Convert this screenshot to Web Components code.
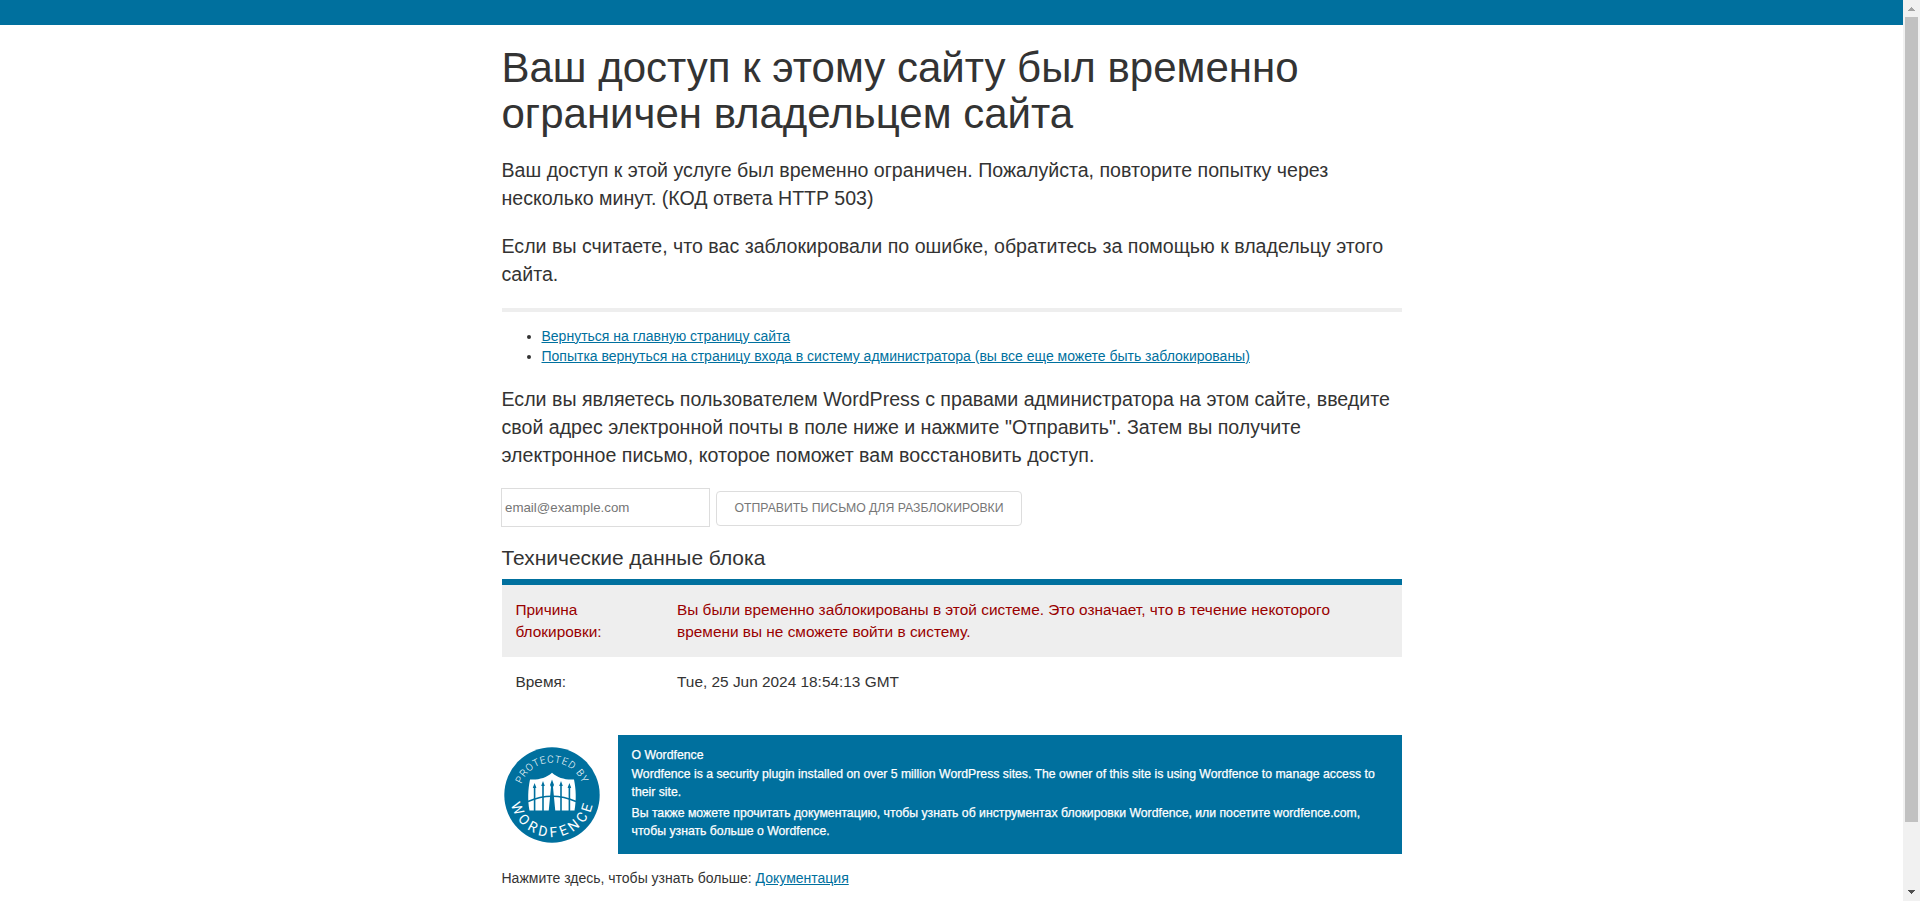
<!DOCTYPE html>
<html lang="ru">
<head>
<meta charset="utf-8">
<title>Доступ временно ограничен</title>
<style>
html,body{margin:0;height:100%;overflow:hidden;background:#fff}
body{font:14px/20px "Liberation Sans",Arial,sans-serif;color:#333}
</style>
</head>
<body>
<block-page></block-page>
<script>
const define = (name, html) => customElements.define(name, class extends HTMLElement {
  constructor(){ super(); this.attachShadow({mode:'open'}).innerHTML = html; }
});

define('page-scrollbar', `<style>
:host{display:flex;flex-direction:column;width:17px;height:100%;background:#f1f1f1;align-items:center;box-sizing:border-box}
svg{width:17px;height:17px;flex:none;display:block}
.track{flex:1;width:100%}
.thumb{width:13px;height:805px;margin:0 auto;background:#c1c1c1}
</style>
<svg viewBox="0 0 17 17" shape-rendering="crispEdges"><path d="M8 7h1v1h1v1h1v1h1v1H5v-1h1V9h1V8h1z" fill="#a3a3a3"/></svg>
<div class="track"><div class="thumb"></div></div>
<svg viewBox="0 0 17 17" shape-rendering="crispEdges"><path d="M5 6h7v1h-1v1h-1v1H9v1H8V9H7V8H6V7H5z" fill="#505050"/></svg>`);

define('text-block', `<style>
:host{display:block;font-size:19.6px;line-height:28px;margin-bottom:19.6px;white-space:nowrap}
</style><slot></slot>`);

define('page-title', `<style>
:host{display:block;margin-bottom:19.1px;white-space:nowrap}
h1{font-size:42px;line-height:46.2px;font-weight:400;margin:0}
</style><h1><slot></slot></h1>`);

define('link-list', `<style>
:host{display:block;margin:13.9px 0 19px}
ul{margin:0;padding:0 0 0 40px}
a{color:#00709e;text-decoration:underline;white-space:nowrap}
</style><ul><li><a>Вернуться на главную страницу сайта</a></li>
<li><a>Попытка вернуться на страницу входа в систему администратора (вы все еще можете быть заблокированы)</a></li></ul>`);

define('unlock-form', `<style>
:host{display:flex;align-items:center;gap:6px;margin-left:-.5px;height:39px}
input,button{font-family:inherit;box-sizing:border-box;background:#fff;border:1px solid #ddd;margin:0}
input{width:209px;height:39px;padding:0 3px;font-size:13.3px;color:#777}
input::placeholder{color:#757575;opacity:1}
button{width:306px;height:35px;margin-top:1px;border-radius:4px;font-size:12.25px;color:#777;padding:0;white-space:nowrap;text-transform:uppercase}
</style><input placeholder="email@example.com"><button>Отправить письмо для разблокировки</button>`);

define('block-details', `<style>
:host{display:block;margin-top:17px}
h2{font-size:20.95px;line-height:28px;font-weight:400;margin:0 0 7px}
.rows{border-top:6px solid #00709e}
.row{display:grid;grid-template-columns:161.5px 1fr;padding:14px;font-size:15.4px;line-height:22px;white-space:nowrap}
.reason{background:#eee;color:#900}
</style><h2>Технические данные блока</h2>
<div class="rows">
<div class="row reason"><div>Причина<br>блокировки:</div><div>Вы были временно заблокированы в этой системе. Это означает, что в течение некоторого<br>времени вы не сможете войти в систему.</div></div>
<div class="row"><div>Время:</div><div>Tue, 25 Jun 2024 18:54:13 GMT</div></div>
</div>`);

define('protected-badge', `<style>
:host{display:block;width:96px;height:96px}
svg{display:block;width:96px;height:96px;overflow:visible}
text{font-family:Roboto,sans-serif;fill:#fff}
</style>
<svg viewBox="0 0 96 96">
<defs><path id="top" d="M15.5 48a32.5 32.5 0 0 1 65 0"/><path id="bottom" d="M6 48a42 42 0 0 0 84 0"/></defs>
<circle cx="48" cy="48" r="47.700" fill="#00709e"/>
<path d="M48 25.800C42 31 35 33 26 32.500C24 42 23.500 53 25.500 63.500H70.500C72.500 53 72 42 70 32.500C61 33 54 31 48 25.800Z" fill="#fff"/>
<g fill="none" stroke="#00709e">
<path d="M24 54.500Q48 44 72 54.500" stroke-width="1.5"/>
<path d="M30.600 39V64M39 37V64M57 37V64M65.400 39V64" stroke-width="1.6"/>
</g>
<path d="M28.800 41l1.800-5 1.800 5zM37.200 39l1.800-5 1.800 5zM55.200 39l1.800-5 1.800 5zM63.600 41l1.800-5 1.800 5zM46 38l2-5.500 2 5.500-1 2 2.300 24h-6.600L47 40z" fill="#00709e"/>
<text font-size="10" font-weight="300" text-anchor="middle" letter-spacing=".8"><textPath href="#top" startOffset="50%">PROTECTED BY</textPath></text>
<text font-size="14" text-anchor="middle" letter-spacing="3.6"><textPath href="#bottom" startOffset="51%">WORDFENCE</textPath></text>
</svg>`);

define('about-panel', `<style>
:host{display:flex;margin-top:28px;height:119px}
.badge{width:116.500px;padding:11.500px 0 0 2.500px;box-sizing:border-box}
.about{flex:1;box-sizing:border-box;padding:11px 13.500px;background:#00709e;color:#fff;font-size:12.250px;line-height:18px;white-space:nowrap;-webkit-text-stroke:.25px #fff}
p{margin:0 0 3px}
p.head{margin-bottom:1px}
</style><div class="badge"><protected-badge></protected-badge></div>
<div class="about"><p class="head">О Wordfence</p>
<p>Wordfence is a security plugin installed on over 5 million WordPress sites. The owner of this site is using Wordfence to manage access to<br>their site.</p>
<p>Вы также можете прочитать документацию, чтобы узнать об инструментах блокировки Wordfence, или посетите wordfence.com,<br>чтобы узнать больше о Wordfence.</p></div>`);

define('page-footer', `<style>
:host{display:block;margin-top:14px;white-space:nowrap}
a{color:#00709e;text-decoration:underline}
</style>Нажмите здесь, чтобы узнать больше: <a>Документация</a>`);

define('block-page', `<style>
:host{display:flex;height:100%}
.view{flex:1;overflow:hidden}
.bar{height:25px;background:#00709e}
main{width:900px;margin:19.500px auto 0}
hr{border:0;height:4px;background:#eee;margin:20.200px 0 0}
</style><div class="view"><div class="bar"></div><main>
<page-title>Ваш доступ к этому сайту был временно<br>ограничен владельцем сайта</page-title>
<text-block>Ваш доступ к этой услуге был временно ограничен. Пожалуйста, повторите попытку через<br>несколько минут. (КОД ответа HTTP 503)</text-block>
<text-block>Если вы считаете, что вас заблокировали по ошибке, обратитесь за помощью к владельцу этого<br>сайта.</text-block>
<hr>
<link-list></link-list>
<text-block>Если вы являетесь пользователем WordPress с правами администратора на этом сайте, введите<br>свой адрес электронной почты в поле ниже и нажмите "Отправить". Затем вы получите<br>электронное письмо, которое поможет вам восстановить доступ.</text-block>
<unlock-form></unlock-form>
<block-details></block-details>
<about-panel></about-panel>
<page-footer></page-footer>
</main></div><page-scrollbar></page-scrollbar>`);
</script>
</body>
</html>
